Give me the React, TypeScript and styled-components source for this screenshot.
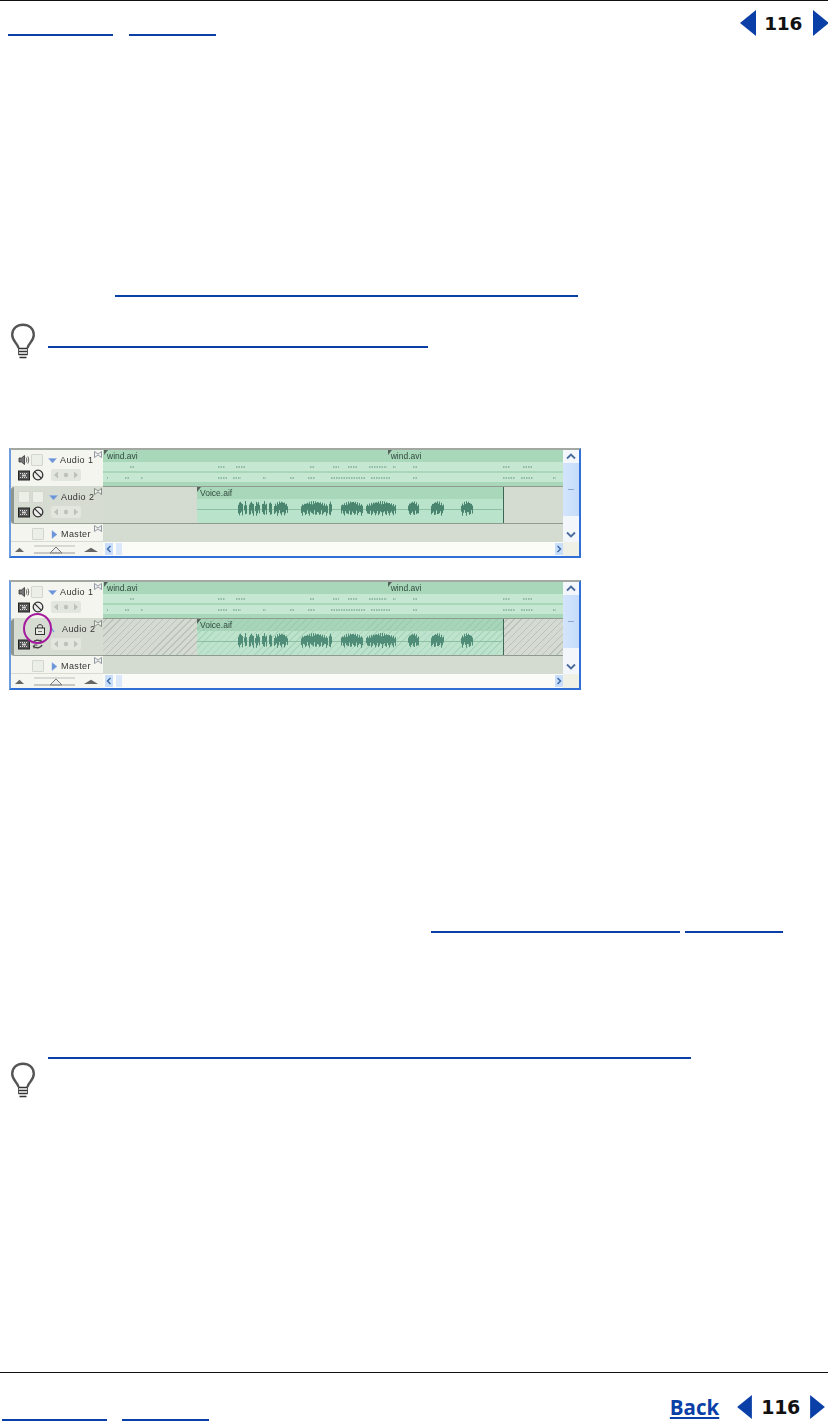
import React from "react";
import styled, { createGlobalStyle } from "styled-components";

const Global = createGlobalStyle`
  html, body { margin: 0; padding: 0; background: #fff; }
  #root { width: 828px; height: 1422px; overflow: hidden; }
`;

const Page = styled.div`
  width: 828px;
  height: 1422px;
  display: flex;
  flex-direction: column;
  background: #fff;
  font-family: "Liberation Sans", Arial, sans-serif;
`;

const Rule = styled.div`
  height: 1px;
  background: #111;
  flex: none;
`;

const Header = styled.header`
  flex: none;
  height: 47px;
  display: flex;
  justify-content: space-between;
`;

const LinkGroup = styled.div<{ $left: number; $top: number; $gap: number }>`
  display: flex;
  gap: ${(p) => p.$gap}px;
  padding: ${(p) => p.$top}px 0 0 ${(p) => p.$left}px;
`;

const LinkLine = styled.div<{ $w: number; $indent?: number; $h?: number }>`
  width: ${(p) => p.$w}px;
  height: ${(p) => p.$h ?? 2}px;
  margin-left: ${(p) => p.$indent ?? 0}px;
  background: #0a3fa8;
  flex: none;
`;

const Nav = styled.div`
  display: flex;
  align-items: center;
  height: 26px;
  margin: 9px -1px 0 0;
`;

const PageNo = styled.span<{ $size: number; $ml: number; $mr: number }>`
  font-family: "DejaVu Sans", sans-serif;
  font-weight: 700;
  font-size: ${(p) => p.$size}px;
  letter-spacing: -0.3px;
  margin: 0 ${(p) => p.$mr}px 0 ${(p) => p.$ml}px;
  color: #111;
`;

const Back = styled.span`
  font-family: "Open Sans", sans-serif;
  font-weight: 700;
  font-size: 20.5px;
  line-height: 26px;
  color: #0a3fa8;
  text-decoration: underline;
  text-decoration-thickness: 2px;
  text-underline-offset: 2px;
  margin-right: 18px;
`;

const Main = styled.main`
  flex: 1;
  display: flex;
  flex-direction: column;
`;

const Spaced = styled.div<{ $top: number }>`
  margin-top: ${(p) => p.$top}px;
  flex: none;
`;

const TipRow = styled.div<{ $top: number; $gap: number }>`
  display: flex;
  gap: ${(p) => p.$gap}px;
  margin-top: ${(p) => p.$top}px;
  padding-left: 10px;
  flex: none;
`;

const TipLine = styled.div<{ $top: number }>`
  margin-top: ${(p) => p.$top}px;
`;

const BulbSvg = styled.svg`
  filter: blur(0.4px);
  flex: none;
`;

const Bulb = () => (
  <BulbSvg width="26" height="36" viewBox="0 0 26 36" fill="none">
    <path
      d="M8.5 25C8 20.5 2.2 18.5 2.2 11.8C2.2 5.5 7 1.8 13 1.8C19 1.8 23.8 5.5 23.8 11.8C23.8 18.5 18 20.5 17.5 25"
      stroke="#555"
      strokeWidth="2.4"
    />
    <path d="M8.5 25.5H17.5M8.5 28.5H17.5M8.5 31.5H17.5M9.5 34.5H16.5" stroke="#333" strokeWidth="1.3" />
    <path d="M8.5 25V32M17.5 25V32" stroke="#555" />
  </BulbSvg>
);

const Arrow = ({ dir, w, h }: { dir: "l" | "r"; w: number; h: number }) => (
  <svg width={w} height={h} viewBox="0 0 16 26">
    <path d={dir === "l" ? "M16 0V26L0 13Z" : "M0 0V26L16 13Z"} fill="#0a3fa8" />
  </svg>
);

/* ---- timeline panel ---- */

const Panel = styled.div<{ $top: number }>`
  margin: ${(p) => p.$top}px 0 0 9px;
  width: 572px;
  height: 110px;
  box-sizing: border-box;
  border-top: 2px solid #a3a8a3;
  border-left: 2px solid #6e9ce0;
  border-right: 2px solid #2f6fd6;
  border-bottom: 2px solid #2f6fd6;
  display: grid;
  grid-template-columns: 92px 460px 16px;
  grid-template-rows: 37px 37px 18px 14px;
  background: #f7f7f2;
  filter: blur(0.5px);
  flex: none;
  overflow: hidden;
`;

const Head = styled.div<{ $variant?: "plain" | "active" }>`
  position: relative;
  box-sizing: border-box;
  display: flex;
  flex-direction: column;
  padding: 3px 0 0 7px;
  gap: 1px;
  background: ${(p) => (p.$variant === "active" ? "#d7dcd3" : "#f5f5ef")};
  border-bottom: 1px solid ${(p) => (p.$variant === "active" ? "#9aa39a" : "#d8dbd2")};
  ${(p) => p.$variant === "active" && "border-left: 3px solid #8d968c; border-radius: 3px 0 0 3px; padding-left: 4px;"}
`;

const Line = styled.div`
  display: flex;
  align-items: center;
  height: 14px;
`;

const TrackName = styled.span<{ $left: number }>`
  font-size: 9px;
  letter-spacing: 0.4px;
  color: #333;
  margin-left: ${(p) => p.$left}px;
  white-space: nowrap;
`;

const Square = styled.div<{ $ml?: number }>`
  width: 12px;
  height: 12px;
  box-sizing: border-box;
  border: 1px solid #d2d6cf;
  background: #eceee8;
  border-radius: 1px;
  margin-left: ${(p) => p.$ml ?? 0}px;
  flex: none;
`;

const Collapse = styled.span`
  position: absolute;
  right: 1px;
  top: 1px;
  line-height: 0;
`;

const Circle = styled.div`
  position: absolute;
  left: 9px;
  top: -6px;
  width: 29px;
  height: 31px;
  box-sizing: border-box;
  border: 2px solid #a51a9f;
  border-radius: 50%;
`;

const IconSvg = styled.svg<{ $ml?: number }>`
  margin-left: ${(p) => p.$ml ?? 0}px;
  flex: none;
`;

const Speaker = () => (
  <IconSvg width="12" height="12" viewBox="0 0 12 12">
    <path d="M1 4H3.5L6.5 1.5V10.5L3.5 8H1Z" fill="#777" stroke="#333" strokeWidth=".8" />
    <path d="M8 3.5C9 5 9 7 8 8.5M9.8 2.5C11 4.5 11 7.5 9.8 9.5" stroke="#666" fill="none" />
  </IconSvg>
);

const Film = () => (
  <IconSvg width="12" height="11" viewBox="0 0 12 11">
    <rect x=".5" y="1" width="11" height="9" fill="#555" stroke="#222" />
    <path d="M2 3.5H10M2 7.5H10" stroke="#ddd" strokeDasharray="1 1" />
    <rect x="4" y="4.5" width="4" height="2" fill="#ccc" />
  </IconSvg>
);

const NoSign = () => (
  <IconSvg width="12" height="12" viewBox="0 0 12 12" $ml={2}>
    <circle cx="6" cy="6" r="4.8" fill="#eee" stroke="#333" strokeWidth="1.3" />
    <path d="M2.6 2.6L9.4 9.4" stroke="#333" strokeWidth="1.3" />
  </IconSvg>
);

const Sync = () => (
  <IconSvg width="13" height="12" viewBox="0 0 13 12" $ml={1}>
    <path d="M2 5C3 2 8 1 11 4M11 7C10 10 5 11 2 8" stroke="#444" strokeWidth="1.4" fill="none" />
    <path d="M10 1.5V5H6.5M3 10.5V7H6.5" stroke="#444" fill="none" />
  </IconSvg>
);

const Lock = () => (
  <IconSvg width="12" height="12" viewBox="0 0 12 12" $ml={16}>
    <rect x="1.5" y="5" width="9" height="6.5" fill="#e4e6e0" stroke="#333" />
    <path d="M3.5 5V3.5C3.5 1 8.5 1 8.5 3.5V5" stroke="#333" fill="none" />
    <path d="M4 8.5H8" stroke="#777" />
  </IconSvg>
);

const Disclose = ({ open, ml }: { open: boolean; ml: number }) => (
  <IconSvg width="9" height="9" viewBox="0 0 9 9" $ml={ml}>
    <path d={open ? "M.5 2.5H8.5L4.5 7Z" : "M2 .5V8.5L7 4.5Z"} fill="#6a93d8" stroke="#8fb0e6" strokeWidth=".5" />
  </IconSvg>
);

const Slash = () => (
  <IconSvg width="6" height="9" viewBox="0 0 6 9" $ml={3}>
    <path d="M1 1L5 7" stroke="#6a93d8" strokeWidth="1.2" />
  </IconSvg>
);

const Pads = () => (
  <IconSvg width="30" height="12" viewBox="0 0 30 12" $ml={7}>
    <rect x="0" y="0" width="30" height="12" rx="2" fill="#e3e6df" />
    <path d="M7 2.5V9.5L3 6Z" fill="#bcc1ba" />
    <circle cx="15" cy="6" r="2.2" fill="#bcc1ba" />
    <path d="M23 2.5V9.5L27 6Z" fill="#bcc1ba" />
  </IconSvg>
);

const CollapseIcon = ({ tone }: { tone: string }) => (
  <svg width="8" height="7" viewBox="0 0 8 7">
    <path d="M.5 .5L4 3L7.5 .5V6.5L4 4L.5 6.5Z" stroke={tone} strokeWidth=".8" fill="#eef0ee" />
  </svg>
);

const Track = styled.div`
  display: flex;
  flex-direction: column;
  box-sizing: border-box;
  border-bottom: 1px solid #8f9a90;
  background: #d4dbd1;
  min-width: 0;
`;

const ClipRow = styled.div`
  display: flex;
  height: 100%;
`;

const Gap = styled.div<{ $w: number; $hatch?: boolean }>`
  width: ${(p) => p.$w}px;
  flex: none;
  background: ${(p) =>
    p.$hatch
      ? "repeating-linear-gradient(135deg, #d5dad2 0 2px, #bcc3b9 2px 3px, #d5dad2 3px 5px)"
      : "#d4dbd1"};
`;

const Clip = styled.div<{ $w: number }>`
  width: ${(p) => p.$w}px;
  flex: none;
  display: flex;
  flex-direction: column;
  border-right: 1px solid #3f6654;
`;

const ClipHead = styled.div<{ $hatch?: boolean }>`
  height: 12px;
  flex: none;
  display: flex;
  background: ${(p) =>
    p.$hatch
      ? "repeating-linear-gradient(135deg, #a8d5b9 0 2px, #9ccdb0 2px 3px, #a8d5b9 3px 5px)"
      : "#a9d7ba"};
  overflow: hidden;
`;

const ClipName = styled.span<{ $left: number }>`
  position: relative;
  font-size: 8.5px;
  line-height: 13px;
  color: #2f4a3e;
  margin-left: ${(p) => p.$left}px;
  padding-left: 3px;
  white-space: nowrap;
  &::before {
    content: "";
    position: absolute;
    left: 0;
    top: 0;
    border-top: 5px solid #56635d;
    border-right: 4px solid transparent;
  }
`;

const ClipBody = styled.div<{ $hatch?: boolean }>`
  flex: 1;
  line-height: 0;
  background: ${(p) =>
    p.$hatch
      ? "repeating-linear-gradient(135deg, #bde3cc 0 2px, #a9d6bc 2px 3px, #bde3cc 3px 5px)"
      : "#bae3cb"};
`;

const Lane = styled.div<{ $h: number; $tone: string }>`
  height: ${(p) => p.$h}px;
  background: ${(p) => p.$tone};
  line-height: 0;
  flex: none;
`;

const Empty = styled.div`
  background: #d4dbd1;
`;

const ScrollV = styled.div`
  grid-column: 3;
  grid-row: 1 / 4;
  display: flex;
  flex-direction: column;
  background: #f3f6fb;
`;

const ThumbV = styled.div`
  height: 53px;
  flex: none;
  background: linear-gradient(90deg, #d4e5fc, #c5dcfa);
  display: flex;
  align-items: center;
  justify-content: center;
`;

const Grip = styled.div`
  width: 6px;
  height: 1px;
  background: #8aa6d0;
`;

const ChevronTop = styled.div`
  height: 13px;
  flex: none;
  display: flex;
  align-items: center;
  justify-content: center;
`;

const ChevronBottom = styled.div`
  flex: 1;
  display: flex;
  align-items: flex-end;
  justify-content: center;
  padding-bottom: 4px;
`;

const ZoomCell = styled.div`
  display: flex;
  align-items: center;
  gap: 4px;
  padding-left: 4px;
  background: #f6f6f0;
`;

const ScrollH = styled.div`
  display: flex;
  align-items: center;
  justify-content: space-between;
  padding-left: 2px;
  background: #fbfbf7;
`;

const ScrollBtn = styled.div`
  width: 8px;
  height: 12px;
  background: #c9defa;
  display: flex;
  align-items: center;
  justify-content: center;
`;

const ThumbH = styled.div`
  width: 6px;
  height: 12px;
  margin-left: 3px;
  background: #dbe8fb;
  margin-right: auto;
`;

const ResizeCell = styled.div`
  background: #eff0e6;
`;

const Slider = () => (
  <svg width="52" height="9" viewBox="0 0 52 9">
    <path d="M6 1H47" stroke="#bbb" />
    <path d="M22 8H34L28 2Z" fill="#eee" stroke="#555" strokeWidth=".8" />
    <path d="M6 8H47" stroke="#999" />
  </svg>
);

const Mount = ({ w }: { w: number }) => (
  <svg width={w} height="5" viewBox="0 0 14 7" preserveAspectRatio="none">
    <path d="M0 7L7 1L14 7Z" fill="#666" />
  </svg>
);

const blobs: [number, number][] = [
  [0, 5], [6, 3], [11, 5], [17, 5], [24, 5], [31, 3], [36, 14],
  [63, 27], [91, 3], [103, 22], [128, 30], [170, 11], [193, 13], [223, 12],
];

const Wave = ({ hatch }: { hatch?: boolean }) => {
  const d: string[] = [];
  blobs.forEach(([start, len], bi) => {
    for (let i = 0; i < len; i++) {
      const x = 41 + start + i;
      const env = Math.sin(((i + 0.5) / len) * Math.PI);
      const n = 0.55 + 0.45 * Math.abs(Math.sin((x + bi) * 1.7));
      const up = Math.max(1, 8 * n * (0.5 + env / 2));
      const down = Math.max(1, 6 * n * Math.abs(Math.cos(x * 0.9)) + 1);
      d.push(`M${x + 0.5} ${10 - up}V${10 + down}`);
    }
  });
  return (
    <svg width="305" height="24" viewBox="0 0 305 24">
      <path d="M0 10.5H305" stroke="#8cbfa6" />
      <path d={d.join("")} stroke={hatch ? "#4f8d78" : "#4a8570"} strokeWidth="1" fill="none" />
    </svg>
  );
};

const Ticks = ({ marks }: { marks: [number, number][] }) => (
  <svg width="460" height="9" viewBox="0 0 460 9">
    {marks.map(([x, w]) => (
      <path key={x} d={`M${x} 5H${x + w}`} stroke="#5f8d78" strokeWidth="1" strokeDasharray="1.5 1" />
    ))}
  </svg>
);

const lMarks: [number, number][] = [
  [27, 4], [115, 7], [133, 10], [207, 4], [230, 6], [245, 10], [266, 18], [290, 3],
  [310, 4], [400, 7], [420, 9],
];
const rMarks: [number, number][] = [
  [4, 1], [22, 5], [38, 2], [115, 10], [130, 8], [160, 3], [187, 5], [205, 7], [228, 35],
  [268, 20], [310, 5], [400, 12], [418, 12], [450, 3],
];

const Timeline = ({ top, locked }: { top: number; locked?: boolean }) => (
  <Panel $top={top}>
    <Head>
      <Line>
        <Speaker />
        <Square $ml={1} />
        <Disclose open ml={5} />
        <TrackName $left={3}>Audio 1</TrackName>
      </Line>
      <Line>
        <Film />
        <NoSign />
        <Pads />
      </Line>
      <Collapse>
        <CollapseIcon tone="#7c8390" />
      </Collapse>
    </Head>
    <Track>
      <ClipHead>
        <ClipName $left={1}>wind.avi</ClipName>
        <ClipName $left={250}>wind.avi</ClipName>
      </ClipHead>
      <Lane $h={9} $tone="#c6e7d2">
        <Ticks marks={lMarks} />
      </Lane>
      <Lane $h={2} $tone="#a9d7ba" />
      <Lane $h={9} $tone="#c6e7d2">
        <Ticks marks={rMarks} />
      </Lane>
      <Lane $h={4} $tone="#a9d7ba" />
    </Track>
    <Head $variant="active">
      <Line>
        {locked ? (
          <>
            <Lock />
            <Slash />
            <TrackName $left={7}>Audio 2</TrackName>
            <Circle />
          </>
        ) : (
          <>
            <Square />
            <Square $ml={2} />
            <Disclose open ml={5} />
            <TrackName $left={3}>Audio 2</TrackName>
          </>
        )}
      </Line>
      <Line>
        <Film />
        {locked ? <Sync /> : <NoSign />}
        <Pads />
      </Line>
      <Collapse>
        <CollapseIcon tone="#6f7a70" />
      </Collapse>
    </Head>
    <Track>
      <ClipRow>
        <Gap $w={94} $hatch={locked} />
        <Clip $w={306}>
          <ClipHead $hatch={locked}>
            <ClipName $left={0}>Voice.aif</ClipName>
          </ClipHead>
          <ClipBody $hatch={locked}>
            <Wave hatch={locked} />
          </ClipBody>
        </Clip>
        <Gap $w={60} $hatch={locked} />
      </ClipRow>
    </Track>
    <Head>
      <Line>
        <Square $ml={14} />
        <Disclose open={false} ml={6} />
        <TrackName $left={2}>Master</TrackName>
      </Line>
      <Collapse>
        <CollapseIcon tone="#7c8390" />
      </Collapse>
    </Head>
    <Empty />
    <ScrollV>
      <ChevronTop>
        <svg width="10" height="7" viewBox="0 0 10 7">
          <path d="M1 5.5L5 1.5L9 5.5" stroke="#4a6c9c" strokeWidth="1.8" fill="none" />
        </svg>
      </ChevronTop>
      <ThumbV>
        <Grip />
      </ThumbV>
      <ChevronBottom>
        <svg width="10" height="7" viewBox="0 0 10 7">
          <path d="M1 1.5L5 5.5L9 1.5" stroke="#4a6c9c" strokeWidth="1.8" fill="none" />
        </svg>
      </ChevronBottom>
    </ScrollV>
    <ZoomCell>
      <Mount w={9} />
      <Slider />
      <Mount w={14} />
    </ZoomCell>
    <ScrollH>
      <ScrollBtn>
        <svg width="6" height="8" viewBox="0 0 6 8">
          <path d="M4.5 1L1.5 4L4.5 7" stroke="#3f6ca8" strokeWidth="1.5" fill="none" />
        </svg>
      </ScrollBtn>
      <ThumbH />
      <ScrollBtn>
        <svg width="6" height="8" viewBox="0 0 6 8">
          <path d="M1.5 1L4.5 4L1.5 7" stroke="#3f6ca8" strokeWidth="1.5" fill="none" />
        </svg>
      </ScrollBtn>
    </ScrollH>
    <ResizeCell />
  </Panel>
);

const Footer = styled.footer`
  flex: none;
  height: 49px;
  border-top: 1px solid #111;
  display: flex;
  justify-content: space-between;
`;

const FootNav = styled.div`
  display: flex;
  align-items: center;
  margin: 21px 3px 0 0;
  height: 26px;
`;

export default function App() {
  return (
    <Page>
      <Global />
      <Rule />
      <Header>
        <LinkGroup $left={8} $top={33} $gap={16}>
          <LinkLine $w={105} />
          <LinkLine $w={87} />
        </LinkGroup>
        <Nav>
          <Arrow dir="l" w={16} h={26} />
          <PageNo $size={18.5} $ml={8} $mr={11}>116</PageNo>
          <Arrow dir="r" w={16} h={26} />
        </Nav>
      </Header>
      <Main>
        <Spaced $top={247}>
          <LinkLine $w={463} $indent={115} />
        </Spaced>
        <TipRow $top={26} $gap={12}>
          <Bulb />
          <TipLine $top={23}>
            <LinkLine $w={380} />
          </TipLine>
        </TipRow>
        <Timeline top={89} />
        <Timeline top={22} locked />
        <Spaced $top={241}>
          <LinkGroup $left={431} $top={0} $gap={5}>
            <LinkLine $w={249} />
            <LinkLine $w={98} />
          </LinkGroup>
        </Spaced>
        <Spaced $top={124}>
          <LinkLine $w={643} $indent={48} />
        </Spaced>
        <TipRow $top={3} $gap={0}>
          <Bulb />
        </TipRow>
      </Main>
      <Footer>
        <LinkGroup $left={2} $top={46} $gap={15}>
          <LinkLine $w={105} />
          <LinkLine $w={87} />
        </LinkGroup>
        <FootNav>
          <Back>Back</Back>
          <Arrow dir="l" w={15} h={24} />
          <PageNo $size={19} $ml={9} $mr={10}>116</PageNo>
          <Arrow dir="r" w={15} h={24} />
        </FootNav>
      </Footer>
    </Page>
  );
}
